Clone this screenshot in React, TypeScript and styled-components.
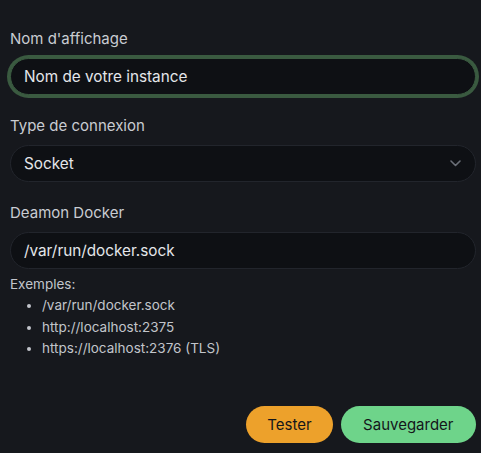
import React, { useState } from 'react';
import styled, { createGlobalStyle } from 'styled-components';

const GlobalStyle = createGlobalStyle`
	html, body {
		margin: 0;
		padding: 0;
		background: #16181d;
	}
	body {
		font-family: Inter, "Noto Sans", sans-serif;
		color: #c8cbd0;
	}
`;

const Form = styled.div`
	display: flex;
	flex-flow: column;
	min-height: 453px;
	box-sizing: border-box;
	padding: 29px 5px 10px 10px;
`;

const Field = styled.div`
	display: flex;
	flex-flow: column;
	gap: 9px;
	margin-bottom: 21px;
`;

const Label = styled.label`
	font-size: 15px;
	line-height: 20px;
	color: #c9ccd2;
`;

const TextInput = styled.input<{ $focused?: boolean }>`
	box-sizing: border-box;
	height: 37px;
	width: 100%;
	padding: 0 13px;
	border-radius: 19px;
	border: 1px solid ${(p) => (p.$focused ? '#3a5a40' : '#22252c')};
	background: #0e1014;
	color: #e4e6ea;
	font-family: inherit;
	font-size: 15.3px;
	outline: none;
	box-shadow: ${(p) => (p.$focused ? '0 0 0 3px #3a5a40' : 'none')};
	caret-color: #e4e6ea;
`;

const SelectBox = styled.div`
	box-sizing: border-box;
	height: 37px;
	display: flex;
	align-items: center;
	padding: 0 13px;
	border-radius: 19px;
	border: 1px solid #22252c;
	background: #0e1014;
	color: #e4e6ea;
	font-size: 15.3px;
`;

const Chevron = styled.svg`
	margin-left: auto;
	margin-right: 1px;
	width: 11px;
	height: 7px;
`;

const Hint = styled.div`
	font-size: 13.5px;
	line-height: 18px;
	color: #c2c5cb;
	margin-top: -15px;
`;

const HintList = styled.ul`
	margin: 2px 0 0;
	padding-left: 32px;
	line-height: 21.5px;
`;

const Actions = styled.div`
	margin-top: auto;
	display: flex;
	justify-content: flex-end;
	gap: 8px;
`;

const Button = styled.button<{ $tone: 'orange' | 'green' }>`
	height: 37px;
	padding: 0 ${(p) => (p.$tone === 'orange' ? '21px' : '22.5px')};
	border: none;
	border-radius: 19px;
	background: ${(p) => (p.$tone === 'orange' ? '#eda12b' : '#6ed48a')};
	color: #14161a;
	font-family: inherit;
	font-size: 15px;
	cursor: pointer;
`;

function App() {
	const [name, setName] = useState('Nom de votre instance');
	const [daemon, setDaemon] = useState('/var/run/docker.sock');

	return (
		<>
			<GlobalStyle />
			<Form>
				<Field>
					<Label>Nom d'affichage</Label>
					<TextInput $focused value={name} onChange={(e) => setName(e.target.value)} />
				</Field>
				<Field>
					<Label>Type de connexion</Label>
					<SelectBox>
						Socket
						<Chevron viewBox="0 0 11 7" fill="none">
							<path d="M1 1l4.5 4.5L10 1" stroke="#6b6f78" strokeWidth="1.6" strokeLinecap="round" strokeLinejoin="round" />
						</Chevron>
					</SelectBox>
				</Field>
				<Field>
					<Label>Deamon Docker</Label>
					<TextInput value={daemon} onChange={(e) => setDaemon(e.target.value)} />
				</Field>
				<Hint>
					Exemples:
					<HintList>
						<li>/var/run/docker.sock</li>
						<li>http://localhost:2375</li>
						<li>https://localhost:2376 (TLS)</li>
					</HintList>
				</Hint>
				<Actions>
					<Button $tone="orange">Tester</Button>
					<Button $tone="green">Sauvegarder</Button>
				</Actions>
			</Form>
		</>
	);
}

export default App;
